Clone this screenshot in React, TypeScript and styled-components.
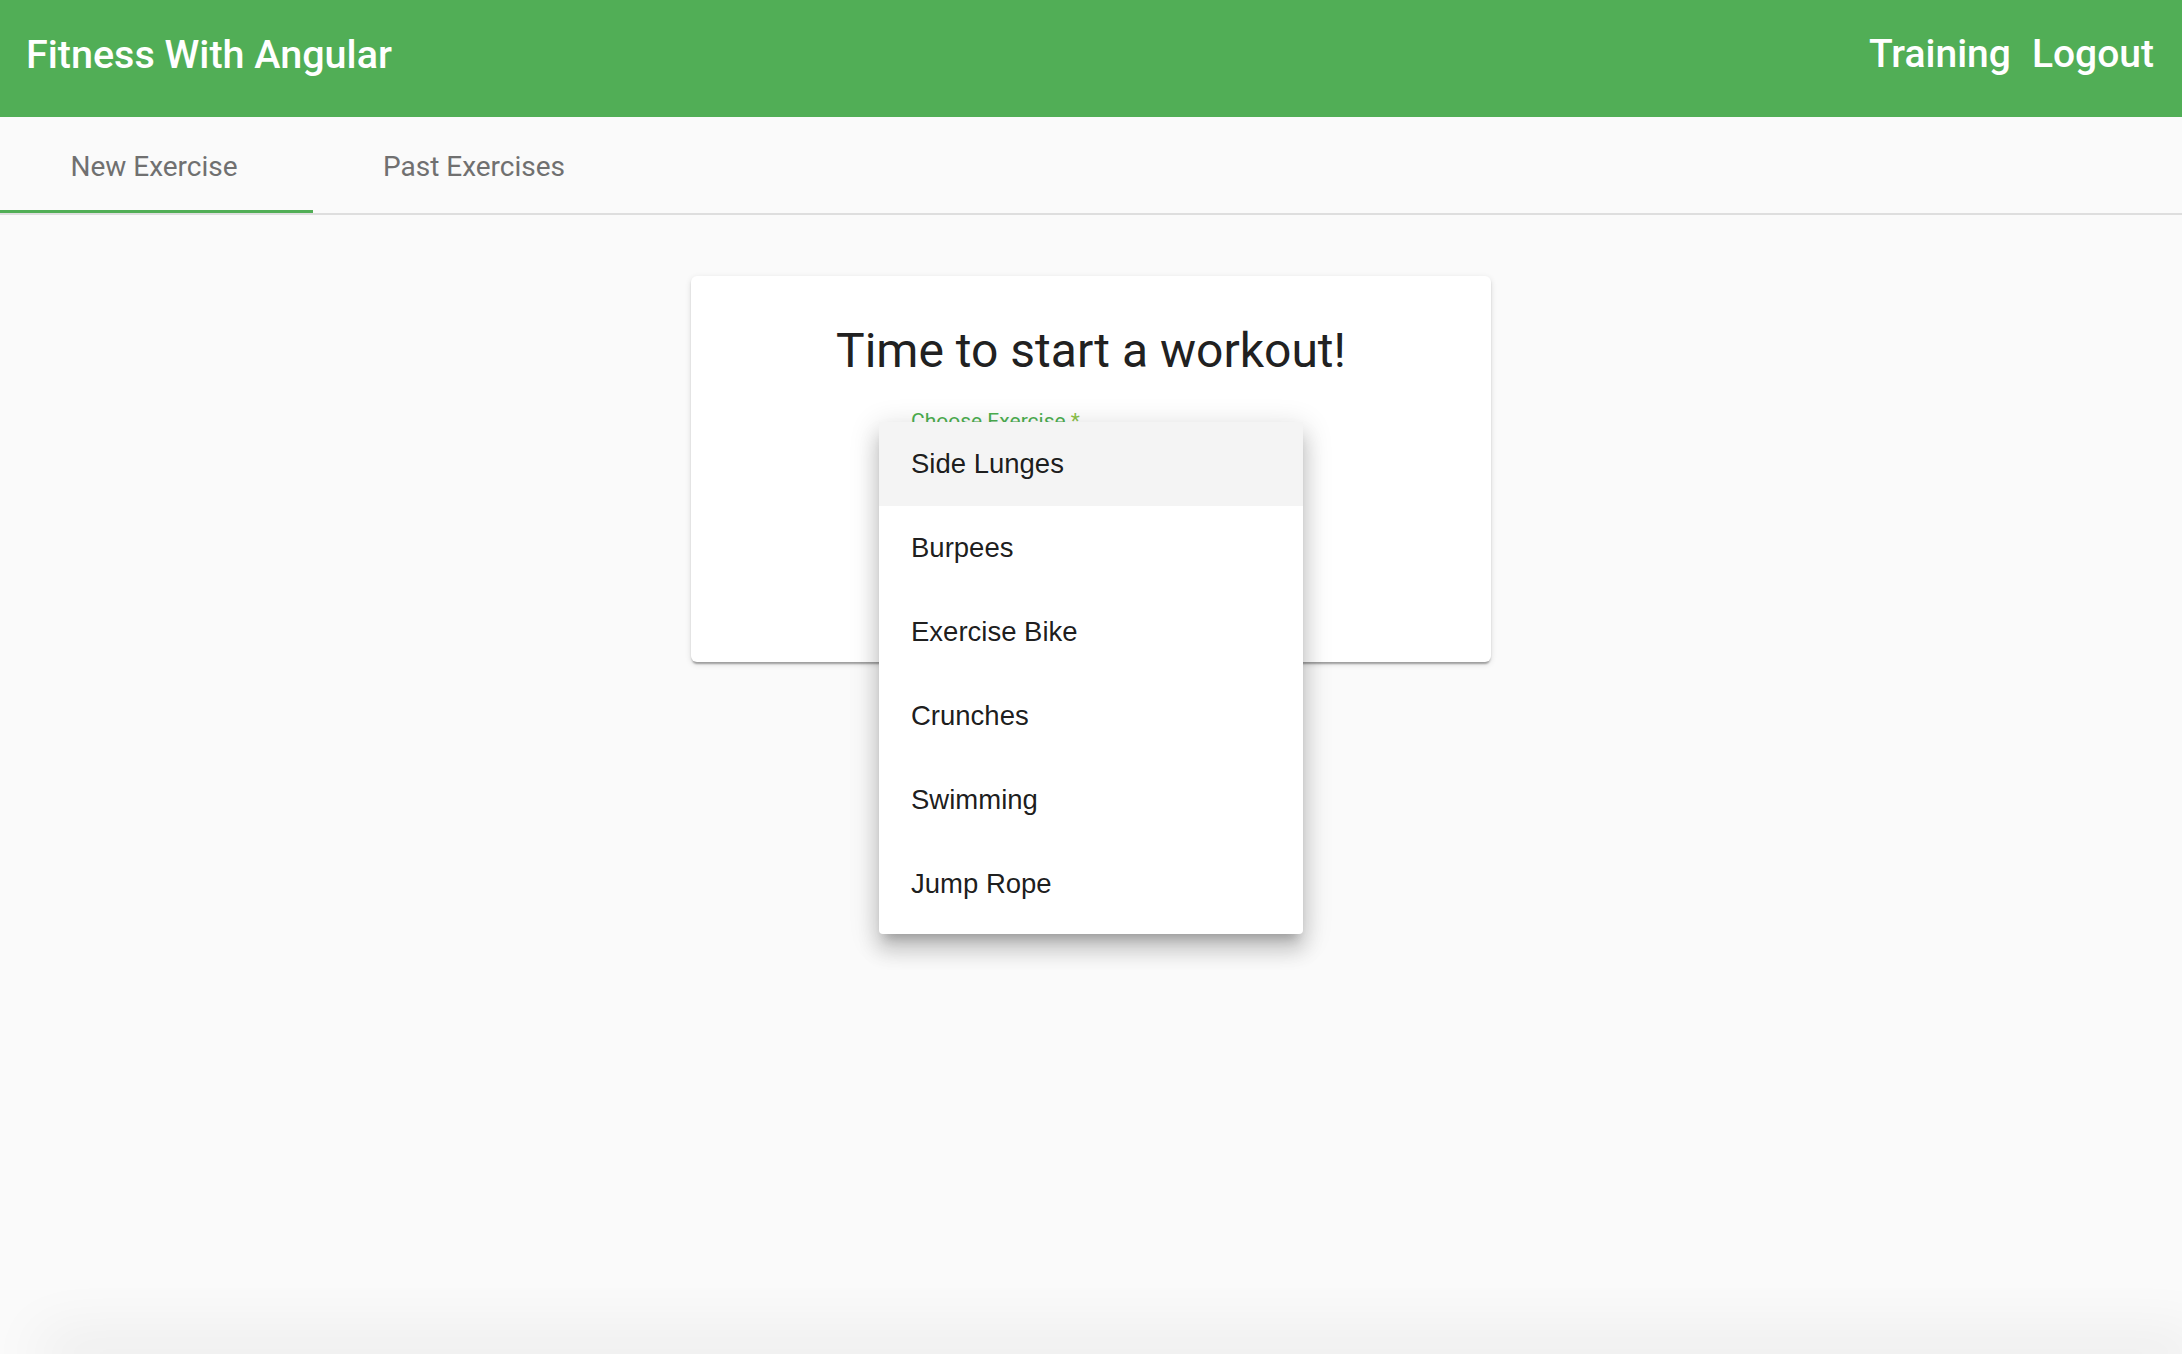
import React from "react";
import styled, { createGlobalStyle } from "styled-components";

const GlobalStyle = createGlobalStyle`
  html, body {
    margin: 0;
    padding: 0;
    background: #fafafa;
  }
  body {
    font-family: Roboto, "Helvetica Neue", Arial, sans-serif;
  }
  * {
    box-sizing: border-box;
  }
`;

const Page = styled.div`
  height: 100vh;
  display: flex;
  flex-direction: column;
  overflow: hidden;
  background: #fafafa;
`;

const Toolbar = styled.header`
  flex: none;
  height: 117px;
  padding: 0 28px 8px 26px;
  background: #51ae56;
  color: #ffffff;
  font-weight: 500;
  display: flex;
  align-items: center;
  justify-content: space-between;
`;

const Brand = styled.div`
  font-size: 39.5px;
  line-height: 1;
`;

const Nav = styled.nav`
  display: flex;
  align-items: center;
  gap: 21px;
`;

const NavLink = styled.a`
  font-size: 39px;
  line-height: 1;
  color: #ffffff;
  text-decoration: none;
`;

const TabBar = styled.div`
  flex: none;
  display: flex;
  border-bottom: 2px solid #dedede;
`;

const Tab = styled.div<{ $active?: boolean; $width: number; $shift: number }>`
  width: ${(p) => p.$width}px;
  height: 96px;
  padding-top: 6px;
  padding-left: ${(p) => Math.max(p.$shift, 0)}px;
  padding-right: ${(p) => Math.max(-p.$shift, 0)}px;
  display: flex;
  align-items: center;
  justify-content: center;
  font-size: 28px;
  font-weight: 400;
  color: #707070;
  border-bottom: 3px solid ${(p) => (p.$active ? "#51ae56" : "transparent")};
`;

const Main = styled.main`
  flex: 1;
  display: flex;
  justify-content: center;
  align-items: flex-start;
  padding-top: 61px;
`;

const Card = styled.section`
  width: 800px;
  height: 386px;
  padding-top: 47px;
  background: #ffffff;
  border-radius: 6px;
  box-shadow: 0 4px 2px -2px rgba(0, 0, 0, 0.2), 0 2px 2px 0 rgba(0, 0, 0, 0.14),
    0 2px 6px 0 rgba(0, 0, 0, 0.12);
  display: flex;
  flex-direction: column;
  align-items: center;
`;

const Heading = styled.h1`
  margin: 0;
  font-size: 48px;
  line-height: 56px;
  font-weight: 400;
  color: #212121;
`;

const Field = styled.div`
  position: relative;
  width: 360px;
  margin-top: 30px;
`;

const Label = styled.div`
  font-size: 21px;
  line-height: 24px;
  color: #4caf50;
`;

const Required = styled.span`
  color: #8bc34a;
`;

const Trigger = styled.div`
  height: 40px;
  border-bottom: 2px solid #4caf50;
`;

const StartButton = styled.button`
  margin-top: 40px;
  width: 150px;
  height: 70px;
  border: none;
  border-radius: 4px;
  background: #51ae56;
  color: #ffffff;
  font-family: Roboto, sans-serif;
  font-size: 27px;
`;

const Panel = styled.div`
  position: absolute;
  left: -32px;
  top: 13px;
  width: 424px;
  padding-bottom: 8px;
  background: #ffffff;
  border-radius: 4px;
  z-index: 10;
  box-shadow: 0 10px 10px -6px rgba(0, 0, 0, 0.2), 0 16px 20px 2px rgba(0, 0, 0, 0.14),
    0 6px 28px 4px rgba(0, 0, 0, 0.12);
`;

const Option = styled.div<{ $active?: boolean }>`
  height: 84px;
  padding: 0 32px;
  display: flex;
  align-items: center;
  font-family: "Liberation Sans", Arial, sans-serif;
  font-size: 27.5px;
  color: rgba(0, 0, 0, 0.9);
  background: ${(p) => (p.$active ? "#f4f4f4" : "transparent")};
`;

const BottomEdge = styled.div`
  flex: none;
  height: 0;
  margin-left: 60px;
  box-shadow: 0 0 60px 20px rgba(0, 0, 0, 0.07);
`;

const exercises = ["Side Lunges", "Burpees", "Exercise Bike", "Crunches", "Swimming", "Jump Rope"];

export default function App() {
  return (
    <>
      <GlobalStyle />
      <Page>
        <Toolbar>
          <Brand>Fitness With Angular</Brand>
          <Nav>
            <NavLink href="#">Training</NavLink>
            <NavLink href="#">Logout</NavLink>
          </Nav>
        </Toolbar>
        <TabBar>
          <Tab $active $width={313} $shift={-5}>
            New Exercise
          </Tab>
          <Tab $width={322} $shift={0}>
            Past Exercises
          </Tab>
        </TabBar>
        <Main>
          <Card>
            <Heading>Time to start a workout!</Heading>
            <Field>
              <Label>
                Choose Exercise <Required>*</Required>
              </Label>
              <Trigger />
              <Panel>
                {exercises.map((name, i) => (
                  <Option key={name} $active={i === 0}>
                    {name}
                  </Option>
                ))}
              </Panel>
            </Field>
            <StartButton>Start</StartButton>
          </Card>
        </Main>
        <BottomEdge />
      </Page>
    </>
  );
}
